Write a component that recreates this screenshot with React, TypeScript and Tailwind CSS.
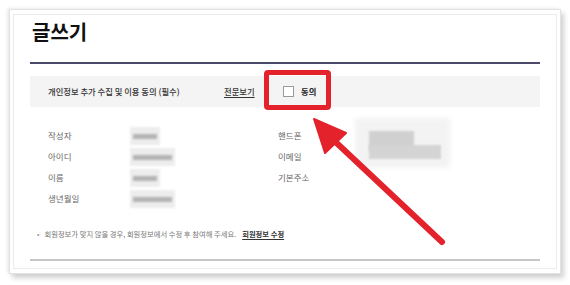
import React from "react";

const font = { fontFamily: '"Noto Sans CJK KR", "Noto Sans", sans-serif' };

function Blur({ w, h }: { w: number; h: number }) {
    return (
        <div className="relative" style={{ width: w, height: h }}>
            <div className="absolute inset-[-3px] bg-[#ededed] blur-[1px]" />
            <div className="absolute inset-x-0 top-[4px] bottom-[3px] bg-[#b4b4b4] blur-[1px]" />
        </div>
    );
}

const rows: [string, string | null][] = [
    ["작성자", "핸드폰"],
    ["아이디", "이메일"],
    ["이름", "기본주소"],
    ["생년월일", null],
];

export default function App() {
    return (
        <div className="relative w-[570px] h-[285px] bg-white pt-[9px] pl-[9px] overflow-hidden" style={font}>
            {/* paper frame */}
            <div className="w-[552px] h-[265px] bg-white border border-[#e2e2e2] p-[3px] pb-[4px] pt-[4px] shadow-[3px_4px_5px_rgba(0,0,0,0.18),-2px_-1px_3px_rgba(0,0,0,0.08)]">
                <div className="h-full border border-[#ececec] px-[16px] pt-[3px] flex flex-col">
                    {/* Title */}
                    <h1 className="text-[20px] leading-[28px] font-bold text-[#111] pl-[2px]">글쓰기</h1>
                    <div className="mt-[16px] h-[2px] bg-[#4a4a68]" />

                    {/* Agreement band */}
                    <div className="mt-[12px] h-[31px] bg-[#f4f4f4] flex items-center pl-[18px] text-[8.3px] text-[#333]">
                        <span className="w-[176px] font-medium">개인정보 추가 수집 및 이용 동의 (필수)</span>
                        <span className="underline underline-offset-2 font-medium w-[59px]">전문보기</span>
                        <span className="w-[11px] h-[11px] border border-[#999] bg-white" />
                        <span className="ml-[7px] font-bold text-[#222]">동의</span>
                    </div>

                    {/* Member info */}
                    <div className="mt-[18px] pl-[18px] flex flex-col text-[8.5px] text-[#666]">
                        {rows.map(([l, r], i) => (
                            <div key={l} className="h-[21px] flex items-center">
                                <span className="w-[85px]">{l}</span>
                                <div className="w-[145px]">
                                    <Blur w={i === 1 || i === 3 ? 39 : 24} h={12} />
                                </div>
                                {r && <span className="w-[77px]">{r}</span>}
                                {i === 0 && (
                                    <div className="relative w-[90px] h-[21px]">
                                        <div className="absolute left-0 top-[-7px] w-[95px] h-[50px] bg-[#f3f3f3] blur-[2px]" />
                                        <div className="absolute left-[14px] top-[6px] w-[45px] h-[20px] bg-[#d0d0d0] blur-[1px]" />
                                        <div className="absolute left-[14px] top-[20px] w-[72px] h-[14px] bg-[#d4d4d4] blur-[1px]" />
                                    </div>
                                )}
                            </div>
                        ))}
                    </div>

                    {/* Note */}
                    <div className="mt-[15px] h-[21px] flex items-center pl-[7px] text-[7.3px] text-[#777]">
                        <span className="mr-[5px] text-[#999]">•</span>
                        <span>회원정보가 맞지 않을 경우, 회원정보에서 수정 후 참여해 주세요.</span>
                        <span className="ml-[6px] font-bold text-[#333] underline underline-offset-2">회원정보 수정</span>
                    </div>
                    <div className="mt-[14px] h-[2px] bg-[#c6c6c6]" />
                </div>
            </div>

            {/* red highlight box */}
            <div className="absolute left-[264px] top-[70px] w-[67px] h-[40px] border-[5px] border-[#e3222b] rounded-[4px]" />

            {/* red arrow */}
            <svg className="absolute left-0 top-0" width="570" height="285" viewBox="0 0 570 285">
                <line x1="442" y1="242" x2="326" y2="133" stroke="#e3222b" strokeWidth="6" strokeLinecap="round" />
                <polygon points="314,119 346,133 325,153" fill="#e3222b" stroke="#e3222b" strokeWidth="2" strokeLinejoin="round" />
            </svg>
        </div>
    );
}
